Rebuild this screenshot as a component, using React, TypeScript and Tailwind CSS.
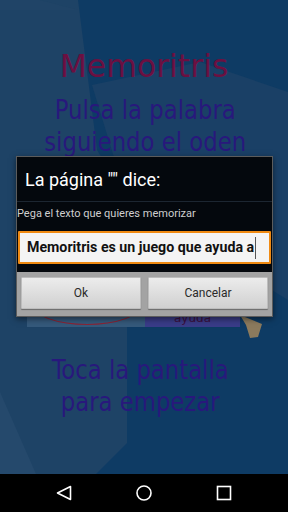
import React from "react";

const bigFont = { fontFamily: '"DejaVu Sans", sans-serif' };
const condFont = { fontFamily: '"DejaVu Sans Condensed", "DejaVu Sans", sans-serif' };

function Background() {
  return (
    <svg className="absolute inset-0" width="288" height="474" viewBox="0 0 288 474">
      <rect x="0" y="0" width="288" height="474" fill="#0e3b64" />
      <polygon points="92,85 200,62 288,92 288,300 127,200" fill="#1a4066" />
      <polygon points="0,0 78,0 97,150 127,200 127,443 96,474 0,474" fill="#1e4366" />
      <polygon points="0,0 40,0 78,10 0,10" fill="#214668" opacity="0.5" />
      <polygon points="0,392 36,474 0,474" fill="#25496c" />
    </svg>
  );
}

function Dialog() {
  return (
    <div className="absolute left-[16px] top-[156px] w-[257px] h-[161px] border border-[#5c5c5c] bg-[#04080d] flex flex-col shadow-[0_2px_6px_rgba(0,0,0,0.5)]" style={{ fontFamily: 'Roboto, "Noto Sans", sans-serif' }}>
      <div className="h-[45px] border-b border-[#1c2631] flex items-center pl-[8px]">
        <span className="text-[18px] text-white leading-none pt-[2px]">La página "" dice:</span>
      </div>
      <div className="pt-[5px] text-[11px] leading-[13px] text-[#cfcfcf]">Pega el texto que quieres memorizar</div>
      <div className="mt-[11px] mx-[1px] h-[33px] border-2 border-[#f08a12] bg-[#f4f4f4] flex items-center pl-[7px] rounded-[1px]">
        <span className="text-[14.2px] font-bold text-[#111] leading-none whitespace-nowrap">Memoritris es un juego que ayuda a</span>
        <span className="ml-[1px] w-[1px] h-[22px] bg-[#555]" />
      </div>
      <div className="mt-[8px] flex-1 bg-[#a3a3a3] flex gap-[7px] px-[4px] pt-[5px] pb-[7px]">
        <div className="flex-1 flex items-center justify-center text-[12px] text-[#2a2a2a] bg-gradient-to-b from-[#ececec] to-[#d0d0d0] border border-[#bdbdbd] shadow-[0_1px_1px_rgba(0,0,0,0.35)] rounded-[1px]">Ok</div>
        <div className="flex-1 flex items-center justify-center text-[12px] text-[#2a2a2a] bg-gradient-to-b from-[#ececec] to-[#d0d0d0] border border-[#bdbdbd] shadow-[0_1px_1px_rgba(0,0,0,0.35)] rounded-[1px]">Cancelar</div>
      </div>
    </div>
  );
}

export default function App() {
  return (
    <div className="relative w-[288px] h-[512px] overflow-hidden flex flex-col bg-black">
      <div className="relative h-[474px] overflow-hidden">
        <Background />
        <div className="relative flex flex-col items-center pt-[50px]">
          <div className="text-[31.5px] leading-[32px] text-[#6b1041]" style={bigFont}>Memoritris</div>
          <div className="mt-[12px] flex flex-col items-center text-[26.5px] leading-[32px] text-[#28187c] whitespace-nowrap [transform:translateX(1.5px)_scaleX(0.955)]" style={condFont}>
            <div>Pulsa la palabra</div>
            <div>siguiendo el oden</div>
          </div>
          <div className="mt-[132px] w-full flex h-[37px] relative">
            <div className="ml-[27px] w-[118px] h-full bg-[#35597b] relative overflow-hidden">
              <div className="absolute left-[6px] right-[4px] bottom-[2px] h-[40px] rounded-[50%] border border-[#8a2436]" />
            </div>
            <div className="w-[95px] h-full bg-[#3a3c88] flex items-end justify-center pb-[3px]">
              <span className="text-[12px] leading-none text-[#3a1040]" style={bigFont}>ayuda</span>
            </div>
            <svg className="absolute left-0 top-0" width="288" height="60" viewBox="0 0 288 60">
              <polygon points="240,25 262,34 258,47 250,48 246,35" fill="#8b7a5d" />
            </svg>
          </div>
          <div className="mt-[27px] flex flex-col items-center text-[26.5px] leading-[32px] text-[#28187c] whitespace-nowrap [transform:translateX(-3.5px)_scaleX(0.955)]" style={condFont}>
            <div>Toca la pantalla</div>
            <div>para empezar</div>
          </div>
        </div>
      </div>
      <div className="h-[38px] bg-black flex items-center">
        <svg width="288" height="38" viewBox="0 0 288 38">
          <polygon points="70.5,12.5 57.5,19 70.5,25.5" fill="none" stroke="#ffffff" strokeWidth="1.6" strokeLinejoin="round" />
          <circle cx="144" cy="19" r="7" fill="none" stroke="#ffffff" strokeWidth="1.6" />
          <rect x="217.5" y="12.5" width="13" height="13" fill="none" stroke="#ffffff" strokeWidth="1.6" />
        </svg>
      </div>
      <Dialog />
    </div>
  );
}
